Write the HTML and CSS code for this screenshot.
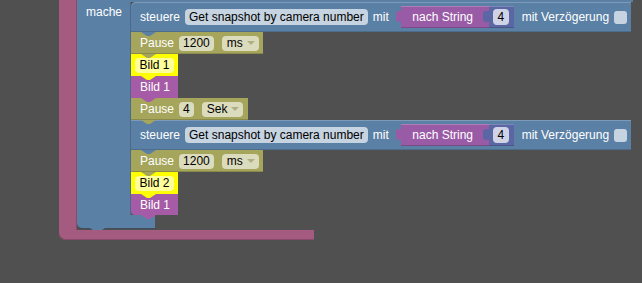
FILE: index.html
```html
<!DOCTYPE html>
<html>
<head>
  <title>Blockly workspace</title>
  <link rel="stylesheet" href="styles.css">
</head>
<body>
  <div class="workspace">
    <div class="c-block">
      <div class="c-row">
        <div class="pink-arm"></div>
        <div class="c-block">
          <div class="blue-top"></div>
          <div class="c-row">
            <div class="blue-arm"><span class="label">mache</span></div>
            <div class="stack">
              <div class="block control first">
                <span class="label">steuere</span>
                <span class="field">Get snapshot by camera number</span>
                <span class="label">mit</span>
                <span class="convert">
                  <span class="label">nach String</span>
                  <span class="math"><span class="field">4</span></span>
                </span>
                <span class="label wide">mit Verzögerung</span>
                <span class="checkbox"></span>
              </div>
              <div class="block pause">
                <span class="label">Pause</span>
                <span class="field">1200</span>
                <span class="field dropdown">ms</span>
              </div>
              <div class="block highlight"><span class="field">Bild 1</span></div>
              <div class="block image"><span class="label">Bild 1</span></div>
              <div class="block pause">
                <span class="label">Pause</span>
                <span class="field">4</span>
                <span class="field dropdown">Sek</span>
              </div>
              <div class="block control">
                <span class="label">steuere</span>
                <span class="field">Get snapshot by camera number</span>
                <span class="label">mit</span>
                <span class="convert">
                  <span class="label">nach String</span>
                  <span class="math"><span class="field">4</span></span>
                </span>
                <span class="label wide">mit Verzögerung</span>
                <span class="checkbox"></span>
              </div>
              <div class="block pause">
                <span class="label">Pause</span>
                <span class="field">1200</span>
                <span class="field dropdown">ms</span>
              </div>
              <div class="block highlight"><span class="field">Bild 2</span></div>
              <div class="block image last"><span class="label">Bild 1</span></div>
            </div>
          </div>
          <div class="blue-foot"></div>
        </div>
      </div>
      <div class="pink-foot"></div>
    </div>
  </div>
</body>
</html>
```

FILE: styles.css
```css
body {
  margin: 0;
  background-color: #505050;
  font-family: "Liberation Sans", Arial, sans-serif;
  font-size: 12px;
  overflow: hidden;
}

.workspace {
  padding-left: 59px;
}

.c-block {
  display: flex;
  flex-direction: column;
  align-items: flex-start;
}

.c-row {
  display: flex;
  align-items: stretch;
}

.label {
  color: #fff;
  white-space: nowrap;
}

/* outer pink C block */
.pink-arm {
  width: 18px;
  background-color: #a55b80;
  box-shadow: inset -1px 0 #8a4a6a;
}

.pink-foot {
  position: relative;
  width: 255px;
  height: 10px;
  background-color: #a55b80;
  border-radius: 0 0 1px 7px;
  box-shadow: inset 0 -1px #8a4a6a;
}

.pink-foot::after {
  content: "";
  position: absolute;
  left: 11px;
  top: 100%;
  width: 15px;
  height: 4px;
  background-color: #a55b80;
  clip-path: polygon(0 0, 15px 0, 9px 4px, 6px 4px);
}

/* blue C block */
.blue-top {
  width: 556px;
  height: 2px;
  background-color: #5b80a5;
}

.blue-arm {
  width: 54px;
  padding: 3px 0 0 9px;
  box-sizing: border-box;
  background-color: #5b80a5;
  box-shadow: inset -1px 0 #4a6a8a;
}

.blue-foot {
  position: relative;
  width: 78px;
  height: 13px;
  margin-bottom: 2px;
  background-color: #5b80a5;
  border-radius: 0 0 0 5px;
  box-shadow: 0 1px #3f4f5f;
}

.blue-foot::after {
  content: "";
  position: absolute;
  left: 13px;
  top: 100%;
  width: 15px;
  height: 4px;
  background-color: #5b80a5;
  clip-path: polygon(0 0, 15px 0, 9px 4px, 6px 4px);
}

/* statement stack */
.stack {
  display: flex;
  flex-direction: column;
  align-items: flex-start;
}

.block {
  position: relative;
  display: flex;
  align-items: center;
  gap: 4.5px;
  height: 22px;
  padding: 0 4.5px 0 9px;
  box-sizing: border-box;
}

.block::after {
  content: "";
  position: absolute;
  left: 10px;
  top: 100%;
  z-index: 2;
  width: 15px;
  height: 4px;
  background-color: inherit;
  clip-path: polygon(0 0, 15px 0, 9px 4px, 6px 4px);
}

.field {
  height: 16px;
  line-height: 16px;
  padding: 0 4.5px;
  border-radius: 4px;
  color: #000;
  white-space: nowrap;
}

.control {
  height: 30px;
  padding-right: 4px;
  background-color: #5b80a5;
  box-shadow: inset 0 1px #7d9ab8, inset 0 -1px #4d6d8d;
}

.control.first {
  border-top-left-radius: 5px;
}

.control .field {
  background-color: #c6d3e0;
}

.control .wide {
  margin-left: 3.5px;
}

.convert {
  position: relative;
  display: flex;
  align-items: center;
  height: 22px;
  margin-left: 8px;
  padding-left: 11px;
  background-color: #9a5ba6;
  box-shadow: inset 0 -1px #7d4a88, inset 0 1px #ad7db7;
}

.convert::before {
  content: "";
  position: absolute;
  left: -5px;
  top: 5px;
  width: 5px;
  height: 11px;
  background-color: #9a5ba6;
  border-radius: 3px 0 0 3px;
}

.math {
  position: relative;
  display: flex;
  align-items: center;
  height: 22px;
  margin-left: 16px;
  padding: 0 5px 0 4px;
  background-color: #5b67a5;
  box-shadow: inset 0 -1px #4a5488, inset 0 1px #7d86b8;
}

.math::before {
  content: "";
  position: absolute;
  left: -6px;
  top: 5px;
  width: 6px;
  height: 11px;
  background-color: #5b67a5;
  border-radius: 3px 0 0 3px;
}

.math .field {
  background-color: #d0d3e6;
}

.checkbox {
  width: 13px;
  height: 13px;
  border-radius: 3px;
  background-color: #c6d3e0;
}

.pause {
  background-color: #a5a55b;
  box-shadow: inset 0 -1px #8a8a4a;
}

.pause .field {
  height: 15px;
  line-height: 15px;
  background-color: #dbdbbd;
}

.pause .dropdown {
  display: flex;
  align-items: center;
  margin-left: 3.5px;
  padding-right: 4px;
}

.dropdown::after {
  content: "";
  margin-left: 4px;
  border-left: 4px solid transparent;
  border-right: 4px solid transparent;
  border-top: 4px solid #afaf85;
}

.highlight {
  width: 47px;
  padding: 0 4px;
  background-color: #ffff00;
}

.highlight .field {
  height: 15px;
  line-height: 15px;
  width: 100%;
  box-sizing: border-box;
  background-color: #ffff9c;
}

.image {
  width: 47px;
  background-color: #a55ba5;
}

.image.last {
  height: 21px;
  border-bottom-left-radius: 4px;
}
```
